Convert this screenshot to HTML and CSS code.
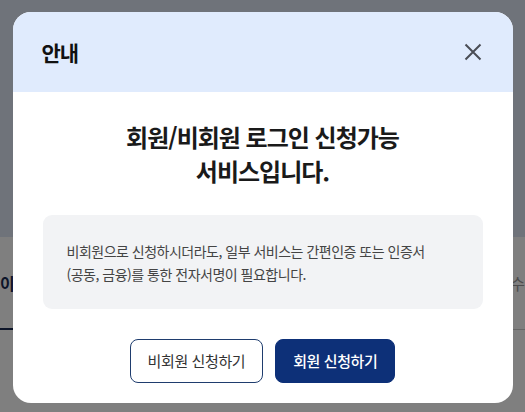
FILE: index.html
```html
<!DOCTYPE html>
<html lang="ko">
<head>
    <meta charset="UTF-8">
    <meta name="viewport" content="width=device-width, initial-scale=1.0">
    <title>안내</title>
    <link rel="stylesheet" href="styles.css">
</head>
<body>
    <div class="page">
        <div class="page-head"></div>
        <div class="tabs">
            <div class="tab active">이용</div>
            <div class="tab">접수</div>
        </div>
    </div>

    <div class="dim">
        <div class="modal">
            <div class="modal-head">
                <h2>안내</h2>
                <button type="button" class="btn-close" aria-label="닫기">
                    <svg width="18" height="18" viewBox="0 0 18 18">
                        <path d="M1.5 1.5 L16.5 16.5 M16.5 1.5 L1.5 16.5" stroke="#4a4d55" stroke-width="2" fill="none"/>
                    </svg>
                </button>
            </div>
            <div class="modal-body">
                <p class="title">회원/비회원 로그인 신청가능<br>서비스입니다.</p>
                <div class="notice">
                    비회원으로 신청하시더라도, 일부 서비스는 간편인증 또는 인증서<br>(공동, 금융)를 통한 전자서명이 필요합니다.
                </div>
                <div class="btns">
                    <button type="button" class="btn btn-line">비회원 신청하기</button>
                    <button type="button" class="btn btn-fill">회원 신청하기</button>
                </div>
            </div>
        </div>
    </div>
</body>
</html>
```

FILE: styles.css
```css
* {
    box-sizing: border-box;
}
body {
    margin: 0;
    font-family: "Noto Sans CJK KR", "Noto Sans", sans-serif;
    background-color: #fff;
    color: #111;
}
.page-head {
    height: 237px;
    background-color: #dfe6f4;
}
.tabs {
    display: flex;
    justify-content: space-between;
    padding-top: 34px;
    border-bottom: 1px solid #ccc;
}
.tab {
    font-size: 16px;
    line-height: 24px;
    color: #999;
    padding: 0 0 33px;
}
.tab.active {
    color: #1b2a52;
    font-weight: 700;
    border-bottom: 2px solid #1b2a52;
    margin-bottom: -1px;
}
.dim {
    position: fixed;
    inset: 0;
    background-color: rgba(0,0,0,0.5);
    display: flex;
    align-items: center;
    justify-content: center;
}
.modal {
    width: 500px;
    margin-top: 2px;
    background-color: #fff;
    border-radius: 18px;
    overflow: hidden;
}
.modal-head {
    height: 80px;
    background-color: #e0ebfd;
    display: flex;
    align-items: center;
    justify-content: space-between;
    padding: 0 31px 0 29px;
}
.modal-head h2 {
    margin: 0;
    font-size: 21px;
    font-weight: 700;
    letter-spacing: -1px;
}
.btn-close {
    border: none;
    background: none;
    padding: 0;
    width: 18px;
    height: 18px;
    cursor: pointer;
}
.modal-body {
    padding: 28px 30px 20px;
}
.title {
    margin: 0;
    text-align: center;
    font-size: 24px;
    font-weight: 700;
    line-height: 34px;
    letter-spacing: -1px;
    color: #1a1a1a;
}
.notice {
    margin-top: 27px;
    background-color: #f2f3f5;
    border-radius: 9px;
    padding: 25px 24px 23px;
    font-size: 14px;
    line-height: 23px;
    letter-spacing: -0.5px;
    color: #444;
}
.btns {
    display: flex;
    justify-content: center;
    gap: 12px;
    margin-top: 30px;
}
.btn {
    height: 44px;
    padding: 0 17px;
    border-radius: 8px;
    font-family: inherit;
    font-size: 15px;
    letter-spacing: -0.4px;
    cursor: pointer;
}
.btn-line {
    background-color: #fff;
    border: 1px solid #1f3d6e;
    color: #333;
}
.btn-fill {
    background-color: #0d3078;
    border: 1px solid #0d3078;
    color: #fff;
    font-weight: 500;
}
```
